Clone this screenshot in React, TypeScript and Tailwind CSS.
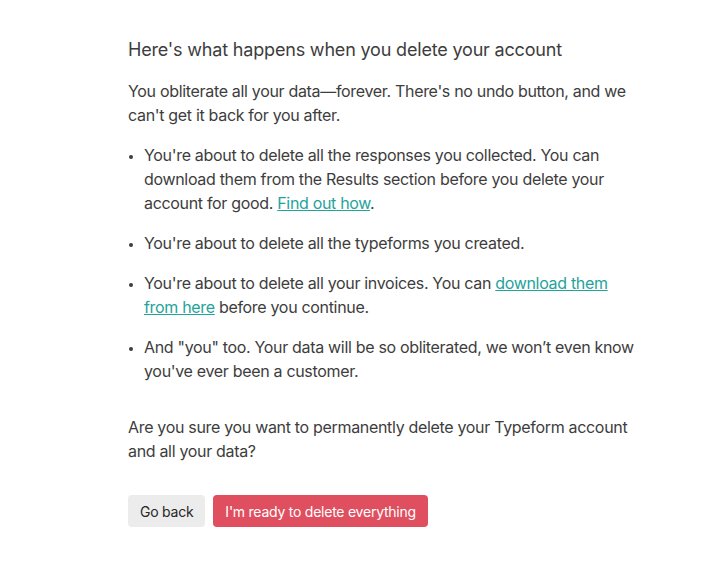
export default function App() {
  return (
    <div className="min-h-[564px] bg-white font-['Inter',sans-serif] text-[#3d3d3d]">
      <div className="ml-[128px] w-[512px] pt-[38px]">
        <h2 className="text-[18px] leading-6 font-normal tracking-[-0.01em]">Here's what happens when you delete your account</h2>
        <div className="tracking-[-0.02em]">
          <p className="mt-[17px] text-[16px] leading-6">
            You obliterate all your data—forever. There's no undo button, and we can't get it back for you after.
          </p>
          <ul className="mt-4 list-disc pl-4 text-[16px] leading-6 marker:text-[12px]">
            <li>
              You're about to delete all the responses you collected. You can download them from the Results section before you delete your account for good.{' '}
              <a href="#" className="text-[#24a39b] underline">Find out how</a>.
            </li>
            <li className="mt-4">You're about to delete all the typeforms you created.</li>
            <li className="mt-4">
              You're about to delete all your invoices. You can{' '}
              <a href="#" className="text-[#24a39b] underline">download them from here</a> before you continue.
            </li>
            <li className="mt-4">And "you" too. Your data will be so obliterated, we won’t even know you've ever been a customer.</li>
          </ul>
          <p className="mt-8 text-[16px] leading-6">
            Are you sure you want to permanently delete your Typeform account and all your data?
          </p>
        </div>
        <div className="mt-8 flex gap-2 tracking-[-0.015em]">
          <button className="h-8 rounded-[4px] bg-[#ececec] px-3 text-[14px] text-[#262626]">Go back</button>
          <button className="h-8 rounded-[4px] bg-[#df4f5f] px-3 text-[14px] text-white">I'm ready to delete everything</button>
        </div>
      </div>
    </div>
  )
}
